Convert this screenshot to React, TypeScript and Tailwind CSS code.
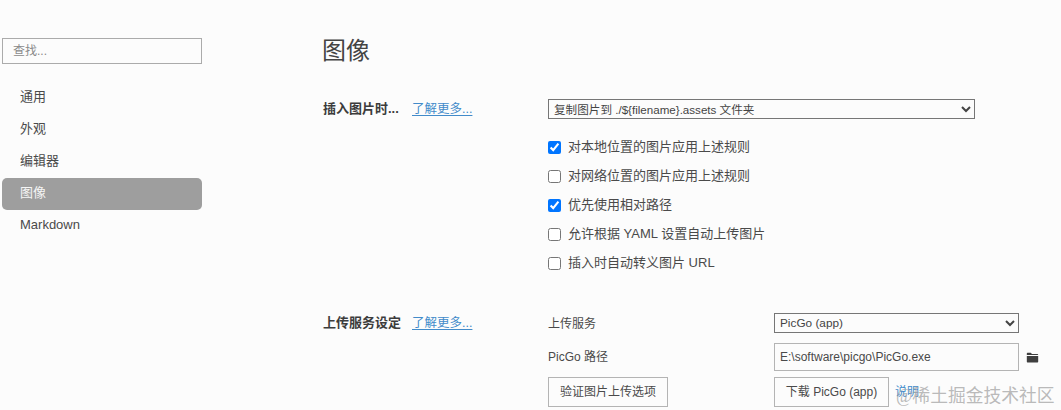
const sans = 'font-["Liberation_Sans","Noto_Sans_CJK_SC",sans-serif]';

const navItems = ['通用', '外观', '编辑器', '图像', 'Markdown'];

const imageOptions = [
  { label: '对本地位置的图片应用上述规则', checked: true },
  { label: '对网络位置的图片应用上述规则', checked: false },
  { label: '优先使用相对路径', checked: true },
  { label: '允许根据 YAML 设置自动上传图片', checked: false },
  { label: '插入时自动转义图片 URL', checked: false },
];

const LearnMore = () => (
  <a href="#" className="text-[12.5px] leading-[18px] text-[#428bca] underline underline-offset-2">
    了解更多...
  </a>
);

const SectionLabel = ({ text }: { text: string }) => (
  <div className="flex w-[225px] shrink-0 items-center self-start">
    <span className="w-[89px] shrink-0 text-[13px] leading-[18px] font-bold whitespace-nowrap text-[#3c3c3c]">{text}</span>
    <LearnMore />
  </div>
);

const App = () => {
  return (
    <div className={`relative flex h-[410px] w-[1061px] overflow-hidden bg-[#fcfcfc] text-[13px] text-[#4a4a4a] ${sans}`}>
      <aside className="w-[202px] shrink-0 ml-[2px] pt-[38px]">
        <input
          readOnly
          placeholder="查找..."
          className="h-[26px] w-[200px] border border-[#ababab] bg-[#fcfcfc] px-[10px] text-[12px] outline-none placeholder:text-[#8a8a8a]"
        />
        <nav className="mt-[18px] w-[200px]">
          {navItems.map((item) => (
            <div
              key={item}
              className={`flex h-[32px] items-center rounded-[5px] pb-[2px] pl-[18px] ${
                item === '图像' ? 'bg-[#9e9e9e] text-[#f5f5f5]' : 'text-[#4a4a4a]'
              }`}
            >
              {item}
            </div>
          ))}
        </nav>
      </aside>

      <main className="ml-[119px] flex-1">
        <h1 className="mt-[36px] -ml-px h-[30px] text-[24px] leading-[30px] font-normal text-[#444444]">图像</h1>

        <section className="mt-[33px] flex">
          <div className="pt-[1px]">
            <SectionLabel text="插入图片时..." />
          </div>
          <div className="w-[427px]">
            <select className="block h-[20px] w-[427px] border border-[#767676] bg-[#fcfcfc] pl-[1px] text-[11.6px] leading-[18px] text-[#444444]">
              <option>复制图片到 ./${'{filename}'}.assets 文件夹</option>
            </select>
            <div className="mt-[18px] flex flex-col gap-[9px]">
              {imageOptions.map((option) => (
                <label key={option.label} className="flex h-[20px] items-center gap-[7px]">
                  <input type="checkbox" readOnly checked={option.checked} className="m-0 h-[13px] w-[13px]" />
                  <span className="leading-[20px]">{option.label}</span>
                </label>
              ))}
            </div>
          </div>
        </section>

        <section className="mt-[40px] flex">
          <div className="pt-[1px]">
            <SectionLabel text="上传服务设定" />
          </div>
          <div className="flex w-[492px] flex-col">
            <div className="flex items-center">
              <span className="w-[226px] shrink-0 pt-[2px] text-[12px]">上传服务</span>
              <select className="block h-[20px] w-[245px] border border-[#767676] bg-[#fcfcfc] pl-[1px] text-[11.8px] text-[#444444]">
                <option>PicGo (app)</option>
              </select>
            </div>
            <div className="mt-[10px] flex items-center">
              <span className="w-[226px] shrink-0 text-[12px]">PicGo 路径</span>
              <input
                readOnly
                value="E:\software\picgo\PicGo.exe"
                className="h-[28px] w-[245px] border border-[#b4b4b4] bg-[#fcfcfc] px-[5px] text-[12px] text-[#4a4a4a] outline-none"
              />
              <svg viewBox="0 0 16 16" className="ml-[7px] h-[13px] w-[13px]" fill="#3f3f3f">
                <path d="M1 3.2C1 2.5 1.5 2 2.2 2h3.6l1.6 1.7h6.4c.7 0 1.2.5 1.2 1.2V5H1zM1 6h14v6.8c0 .7-.5 1.2-1.2 1.2H2.2C1.500 14 1 13.500 1 12.800z" />
              </svg>
            </div>
            <div className="mt-[6px] flex items-center">
              <div className="w-[226px] shrink-0">
                <button className="h-[30px] w-[120px] border border-[#b4b4b4] text-[12px] text-[#4a4a4a]">验证图片上传选项</button>
              </div>
              <button className="h-[30px] w-[115px] border border-[#b4b4b4] text-[12px] text-[#4a4a4a]">下载 PicGo (app)</button>
              <a href="#" className="ml-[6px] text-[12px] text-[#428bca]">说明</a>
            </div>
          </div>
        </section>
      </main>

      <span className='absolute top-[384px] left-[896px] font-["Liberation_Serif","Noto_Sans_CJK_SC",serif] text-[17.800px] leading-[24px] whitespace-nowrap text-[#a8a8a8]/80'>
        @稀土掘金技术社区
      </span>
    </div>
  );
};

export default App;
